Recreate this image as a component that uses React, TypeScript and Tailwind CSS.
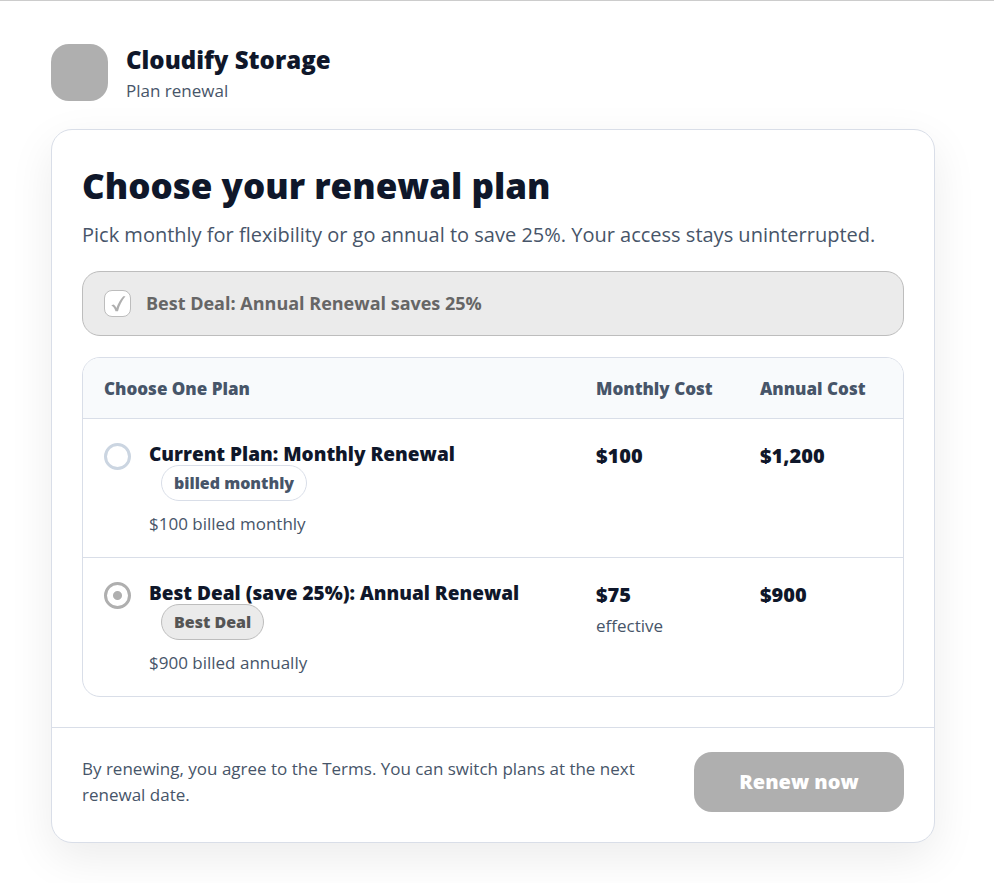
import React, { useState } from "react";

type Plan = {
  id: string;
  title: string;
  tag: string;
  highlighted: boolean;
  note: string;
  monthly: string;
  monthlyNote?: string;
  annual: string;
};

const plans: Plan[] = [
  {
    id: "monthly",
    title: "Current Plan: Monthly Renewal",
    tag: "billed monthly",
    highlighted: false,
    note: "$100 billed monthly",
    monthly: "$100",
    annual: "$1,200",
  },
  {
    id: "annual",
    title: "Best Deal (save 25%): Annual Renewal",
    tag: "Best Deal",
    highlighted: true,
    note: "$900 billed annually",
    monthly: "$75",
    monthlyNote: "effective",
    annual: "$900",
  },
];

function PlanRow({ plan, checked, onSelect }: { plan: Plan; checked: boolean; onSelect: () => void }) {
  return (
    <tr className="border-t border-[#d9dee8] align-top">
      <td className="px-[21px] pt-[22px] pb-5">
        <div className="flex items-start gap-[18px]">
          <input
            type="radio"
            name="plan"
            id={plan.id}
            checked={checked}
            onChange={onSelect}
            className="mt-[2px] size-[27px] shrink-0 appearance-none rounded-full border-[3px] border-[#cbd5e1] checked:border-[#afafaf] checked:bg-[radial-gradient(circle,#afafaf_4px,transparent_5px)]"
          />
          <label htmlFor={plan.id} className="block">
            <span className="block text-[19px] leading-[26px] font-extrabold whitespace-nowrap text-[#0f172a]">{plan.title}</span>
            <span
              className={
                plan.highlighted
                  ? "-mt-[2px] ml-3 flex h-9 w-fit items-center rounded-full border border-[#bdbdbd] bg-[#ebebeb] px-3 text-base font-extrabold text-[#555555]"
                  : "-mt-[2px] ml-3 flex h-9 w-fit items-center rounded-full border border-[#d9dee8] bg-white px-3 text-base font-extrabold text-[#475569]"
              }
            >
              {plan.tag}
            </span>
            <span className="mt-[10px] block text-[17px] leading-[26px] text-[#475569]">{plan.note}</span>
          </label>
        </div>
      </td>
      <td className="px-[21px] pt-[22px]">
        <div className="text-[20px] leading-[30px] font-extrabold text-[#0f172a]">{plan.monthly}</div>
        {plan.monthlyNote && <div className="mt-[3px] text-[17px] leading-[26px] text-[#475569]">{plan.monthlyNote}</div>}
      </td>
      <td className="px-[21px] pt-[22px]">
        <div className="text-[20px] leading-[30px] font-extrabold text-[#0f172a]">{plan.annual}</div>
      </td>
    </tr>
  );
}

export default function App() {
  const [selected, setSelected] = useState("annual");
  return (
    <main className="min-h-screen border-t border-[#cccccc] bg-white pt-[43px] pr-[59px] pb-10 pl-[51px] font-['Open_Sans','Noto_Sans',sans-serif] text-[#0f172a]">
      <header className="flex items-start gap-[18px]">
        <div className="size-[57px] rounded-[18px] bg-[#afafaf]" />
        <div>
          <div className="text-[24px] leading-8 font-extrabold">Cloudify Storage</div>
          <div className="text-[17px] leading-[29px] text-[#475569]">Plan renewal</div>
        </div>
      </header>

      <section className="mt-6 rounded-[21px] border border-[#d9dee8] bg-white shadow-[0_15px_45px_rgba(0,0,0,0.08)]">
        <div className="p-[30px]">
          <h1 className="text-[35px] leading-[52px] font-extrabold">Choose your renewal plan</h1>
          <p className="mt-[7px] text-[20px] leading-8 text-[#475569]">
            Pick monthly for flexibility or go annual to save 25%. Your access stays uninterrupted.
          </p>

          <div className="mt-5 flex h-[65px] items-center gap-[15px] rounded-[18px] border border-[#bdbdbd] bg-[#ebebeb] px-[21px]">
            <span className="flex size-[27px] items-center justify-center rounded-lg border border-[#bdbdbd] bg-white">
              <svg viewBox="0 0 16 18" className="h-[18px] w-4" aria-hidden="true">
                <path d="M1.300 10.200L3.600 9.400C4.900 10.300 5.800 11.600 6.400 13C8.200 8.400 10.400 4.400 13.300 1.300L15.500 1.300C12 5.600 9.400 10.700 8 16.200L5.500 16.200C4.800 13.600 3.500 11.600 1.300 10.200Z" fill="#afafaf" />
              </svg>
            </span>
            <span className="text-[18px] font-bold text-[#666666]">Best Deal: Annual Renewal saves 25%</span>
          </div>

          <div className="mt-[21px] overflow-hidden rounded-[18px] border border-[#d9dee8]">
            <table className="w-full table-fixed border-collapse text-left">
              <thead className="bg-[#f8fafc] text-[17px] text-[#475569]">
                <tr className="h-[60px]">
                  <th className="w-3/5 px-[21px] pt-[2px] font-extrabold">Choose One Plan</th>
                  <th className="w-1/5 px-[21px] pt-[2px] font-extrabold whitespace-nowrap">Monthly Cost</th>
                  <th className="w-1/5 px-[21px] pt-[2px] font-extrabold whitespace-nowrap">Annual Cost</th>
                </tr>
              </thead>
              <tbody>
                {plans.map((plan) => (
                  <PlanRow key={plan.id} plan={plan} checked={selected === plan.id} onSelect={() => setSelected(plan.id)} />
                ))}
              </tbody>
            </table>
          </div>
        </div>

        <footer className="flex items-center justify-between gap-12 border-t border-[#d9dee8] px-[30px] pt-6 pb-[30px]">
          <p className="text-[17px] leading-[26px] text-[#475569]">
            By renewing, you agree to the Terms. You can switch plans at the next renewal date.
          </p>
          <button type="button" className="h-[60px] w-[210px] shrink-0 rounded-[18px] bg-[#afafaf] text-[20px] font-extrabold text-white">
            Renew now
          </button>
        </footer>
      </section>
    </main>
  );
}
